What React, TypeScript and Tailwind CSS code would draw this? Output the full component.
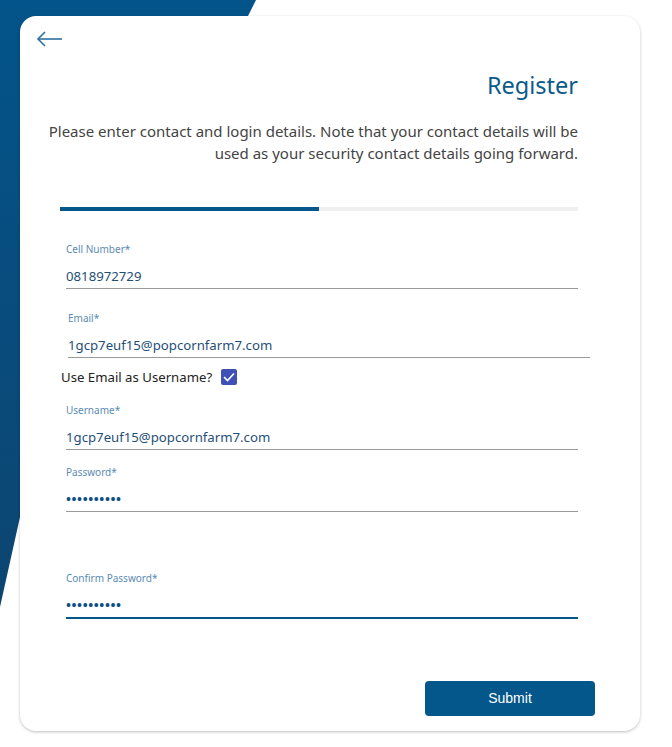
import React from "react";

function Field({ label, value, secret, active, wide }: { label: string; value: string; secret?: boolean; active?: boolean; wide?: boolean }) {
  return (
    <div className={wide ? "w-[524px] pl-[2px]" : "w-[512px]"}>
      <div className="text-[10px] leading-[14px] text-[#5b8bb3]">{label}</div>
      <div
        className={
          "mt-[10px] pb-[2px] text-[13.2px] leading-[20px] text-[#1f4f78] " +
          (active ? "border-b-2 border-[#03578a]" : "border-b border-[#9a9a9a]")
        }
      >
        {secret ? <span className="tracking-[0.6px] text-[#0b4f86] font-bold">{value}</span> : value}
      </div>
    </div>
  );
}

export default function App() {
  return (
    <div className="relative w-[672px] h-[747px] bg-white overflow-hidden" style={{ fontFamily: '"Noto Sans", "Open Sans", sans-serif' }}>
      <svg className="absolute left-0 top-0" width="300" height="620" viewBox="0 0 300 620">
        <defs>
          <linearGradient id="bg" x1="0" y1="0" x2="0" y2="1">
            <stop offset="0" stopColor="#03548a" />
            <stop offset="1" stopColor="#0d4571" />
          </linearGradient>
        </defs>
        <path d="M0 0 L256 0 L248 16 L20 517 L0 607 Z" fill="url(#bg)" />
      </svg>

      <div className="relative ml-[20px] mt-[16px] w-[620px] h-[715px] rounded-[16px] bg-white shadow-[0_1px_3px_rgba(0,0,0,0.25)]">
        <div className="pt-[15px] pl-[16px]">
          <svg width="27" height="16" viewBox="0 0 27 16" fill="none" stroke="#2f6f9f" strokeWidth="1.6">
            <path d="M26 8 H2" />
            <path d="M9 1 L2 8 L9 15" />
          </svg>
        </div>

        <div className="mt-[23px] pr-[62px] text-right text-[23.5px] leading-[30px] text-[#0b5a8c]">Register</div>

        <div className="mt-[20px] pr-[62px] text-right text-[15px] leading-[22px] text-[#444]">
          Please enter contact and login details. Note that your contact details will be
          <br />
          used as your security contact details going forward.
        </div>

        <div className="mt-[43px] ml-[40px] flex w-[518px] h-[4px] bg-[#f0f0f0]">
          <div className="w-[259px] bg-[#03578a]" />
        </div>

        <div className="ml-[46px] mt-[31px] flex flex-col">
          <Field label="Cell Number*" value="0818972729" />
          <div className="mt-[22px]">
            <Field label="Email*" value="1gcp7euf15@popcornfarm7.com" wide />
          </div>
          <div className="mt-[9px] -ml-[5px] flex items-center gap-[9px]">
            <span className="text-[13.2px] leading-[20px] text-[#222]">Use Email as Username?</span>
            <span className="flex h-[16px] w-[16px] items-center justify-center rounded-[2px] bg-[#3f51b5]">
              <svg width="12" height="10" viewBox="0 0 12 10" fill="none" stroke="white" strokeWidth="1.6">
                <path d="M1 5 L4.5 8.5 L11 1.5" />
              </svg>
            </span>
          </div>
          <div className="mt-[16px]">
            <Field label="Username*" value="1gcp7euf15@popcornfarm7.com" />
          </div>
          <div className="mt-[15px]">
            <Field label="Password*" value="••••••••••" secret />
          </div>
          <div className="mt-[59px]">
            <Field label="Confirm Password*" value="••••••••••" secret active />
          </div>
        </div>

        <div className="mt-[62px] ml-[405px]">
          <button className="h-[35px] w-[170px] rounded-[4px] bg-[#03578a] text-[14px] text-white" style={{ fontFamily: '"Liberation Sans", Arial, sans-serif' }}>
            Submit
          </button>
        </div>
      </div>
    </div>
  );
}
